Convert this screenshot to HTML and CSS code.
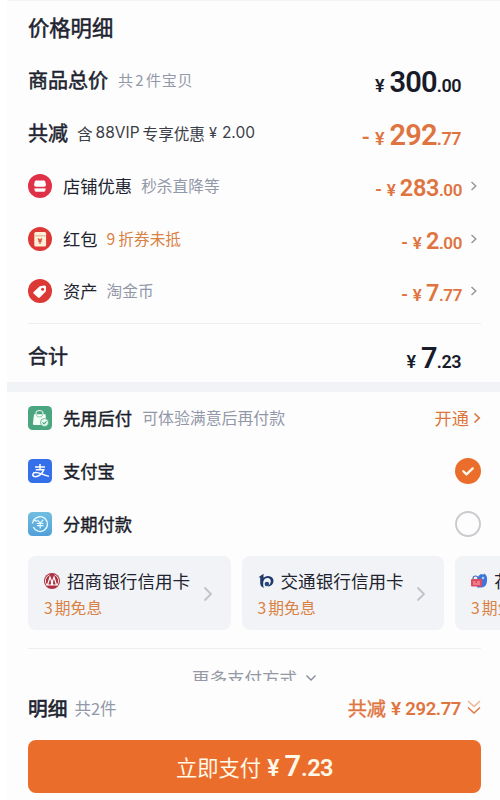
FILE: index.html
```html
<!DOCTYPE html>
<html lang="zh-CN">
<head>
<meta charset="utf-8">
<title>价格明细</title>
<link rel="stylesheet" href="styles.css">
</head>
<body>
<main class="sheet">
  <section class="summary">
    <div class="row"><h1 class="title">价格明细</h1></div>
    <div class="row">
      <span class="head">商品总价</span><span class="note count">共<i>2</i>件宝贝</span>
      <span class="price big"><span class="yen">¥</span><b>300</b><small>.00</small></span>
    </div>
    <div class="row">
      <span class="head">共减</span><span class="vip">含<i>88VIP</i>专享优惠<i class="vip-yen">¥</i><i class="vip-num">2.00</i></span>
      <span class="price big orange"><span class="minus">-</span><span class="yen">¥</span><b>292</b><small>.77</small></span>
    </div>
    <div class="row">
      <svg class="icon" viewBox="0 0 24 24"><circle cx="12" cy="12" r="12" fill="#df3148"/><path d="M8.300 6.500h7.400q1.100 0 1.500 1.100l.8 3.100q0 2-2 2H8q-2 0-2-2l.8-3.100q.4-1.100 1.500-1.100z" fill="#fff"/><path d="M6.500 14q1.300 1 2.700 0 1.400 1 2.800 0 1.400 1 2.800 0 1.400 1 2.700 0v2q0 1.800-1.800 1.800H8.300q-1.800 0-1.800-1.800z" fill="#fff"/></svg>
      <span class="name">店铺优惠</span><span class="note">秒杀直降等</span>
      <span class="price orange"><span class="minus">-</span><span class="yen">¥</span><b>283</b><small>.00</small></span>
      <svg class="more" viewBox="0 0 8 12"><path d="M1.500 2l4.300 4-4.300 4"/></svg>
    </div>
    <div class="row">
      <svg class="icon" viewBox="0 0 24 24"><circle cx="12" cy="12" r="12" fill="#dc3835"/><rect x="6.300" y="5" width="11.800" height="14.500" rx="1.500" fill="#fff0d5"/><path d="M6.500 8.800h11.400" stroke="#dfb5a4" stroke-width="1.200"/><path d="M10 11.500l2 2 2-2M10 14.200h4M12 13.500V17" fill="none" stroke="#d9534a" stroke-width="1.300"/></svg>
      <span class="name">红包</span><span class="note amber"><i>9</i>折券未抵</span>
      <span class="price orange"><span class="minus">-</span><span class="yen">¥</span><b>2</b><small>.00</small></span>
      <svg class="more" viewBox="0 0 8 12"><path d="M1.500 2l4.300 4-4.300 4"/></svg>
    </div>
    <div class="row">
      <svg class="icon" viewBox="0 0 24 24"><circle cx="12" cy="12" r="12" fill="#dc3835"/><path d="M5.600 13l6.200-5.700 4.400-.8q2-.2 1.900 1.700l-.3 4.300-6 6q-.9.800-1.800-.1l-4.400-4q-.8-.7 0-1.400z" fill="#fff"/><circle cx="14.600" cy="10.200" r="1.500" fill="#dc3835"/></svg>
      <span class="name">资产</span><span class="note">淘金币</span>
      <span class="price orange"><span class="minus">-</span><span class="yen">¥</span><b>7</b><small>.77</small></span>
      <svg class="more" viewBox="0 0 8 12"><path d="M1.500 2l4.300 4-4.300 4"/></svg>
    </div>
    <div class="total row">
      <span class="head">合计</span>
      <span class="price big"><span class="yen">¥</span><b>7</b><small>.23</small></span>
    </div>
  </section>
  <section class="methods">
    <div class="row">
      <svg class="icon" viewBox="0 0 24 24"><rect width="24" height="24" rx="4.500" fill="#4ba57f"/><path d="M6 8.300h11.500l1 9.700q0 1-1 1H6q-1.200 0-1.100-1.200z" fill="#f3fff7"/><path d="M8 9V7.500Q8 4.500 11.500 4.500T15 7.500V9" fill="none" stroke="#d7f3e2" stroke-width="1.200"/><path d="M8.500 8.500v.5q0 2 3 2t3-2v-.5" fill="none" stroke="#89c8a7"/><circle cx="16.500" cy="16.500" r="4" fill="#eafff2" stroke="#4ba57f" stroke-width=".8"/><path d="M14.600 16.400l1.500 1.500 2.500-2.600" fill="none" stroke="#4ba57f" stroke-width="1.200"/></svg>
      <span class="name strong">先用后付</span><span class="note trial">可体验满意后再付款</span>
      <span class="open">开通<svg viewBox="0 0 8 12"><path d="M1.500 1.500L6.200 6l-4.700 4.500"/></svg></span>
    </div>
    <div class="row">
      <svg class="icon" viewBox="0 0 24 24"><rect width="24" height="24" rx="4.500" fill="#356fea"/><path d="M7 8h10M12 5v5.700M7.800 10.800h8q-1.200 3.400-4 5.300-2.700 1.800-5 1.500-2.300-.4-2-2.300.4-1.900 2.700-1.900 2.500 0 6 1.500 3 1.300 7.500 2.500" fill="none" stroke="#fff" stroke-width="1.500"/></svg>
      <span class="name strong">支付宝</span>
      <svg class="radio" viewBox="0 0 26 26"><circle cx="13" cy="13" r="13" fill="#eb6d2c"/><path d="M8.300 13.200l3.200 3.200 6.200-6" fill="none" stroke="#fff8e9" stroke-width="2.300" stroke-linecap="round" stroke-linejoin="round"/></svg>
    </div>
    <div class="row">
      <svg class="icon" viewBox="0 0 24 24"><defs><linearGradient id="sky" x2="0" y2="1"><stop stop-color="#72bee1"/><stop offset="1" stop-color="#519fda"/></linearGradient></defs><rect width="24" height="24" rx="4.500" fill="url(#sky)"/><path d="M5.800 8.200A7.400 7.400 0 1 1 5.300 15M4.300 11.500l1.500-3.600 3 1.500" fill="none" stroke="#e5fbff" stroke-width="1.400"/><path d="M9.300 7.800l2.900 3.400 2.900-3.400M8.900 11.500h6.600M8.900 13.700h6.600M12.200 11.200v5.300" fill="none" stroke="#e5fbff" stroke-width="1.200"/></svg>
      <span class="name strong">分期付款</span>
      <svg class="radio" viewBox="0 0 26 26"><circle cx="13" cy="13" r="12" fill="none" stroke="#c9cace" stroke-width="1.900"/></svg>
    </div>
    <div class="cards">
      <article class="card">
        <div class="bank"><svg viewBox="0 0 16 16"><circle cx="8" cy="8" r="8" fill="#ad3140"/><path d="M5.300 1.800A6.600 6.600 0 0 0 3 12.200M10.700 1.800A6.600 6.600 0 0 1 13 12.200" fill="none" stroke="#f5e5e8" stroke-width="1"/><path d="M3.500 12L6 4l1.500 4V12M12.500 12L10 4 8.500 8V12M1.800 12h12.400" fill="none" stroke="#fff" stroke-width="1.200"/></svg>招商银行信用卡</div>
        <div class="offer"><i>3</i>期免息</div>
        <svg class="go" viewBox="0 0 10 16"><path d="M1.500 1.500L8 8l-6.500 6.500"/></svg>
      </article>
      <article class="card">
        <div class="bank"><svg viewBox="0 0 16 16"><path d="M.5 4.200L5.500.7v4Q7.500 3 10 3q5.500.4 5.500 5 0 4.500-6 5.800 3.300-2.200 3.300-5.200Q12.800 5 9.500 5T5.200 9v3.500Q5.200 14 6.500 15 2.200 14 2.200 10V4.500z" fill="#203969"/><circle cx="8.900" cy="11" r="2.300" fill="#234b82"/></svg>交通银行信用卡</div>
        <div class="offer"><i>3</i>期免息</div>
        <svg class="go" viewBox="0 0 10 16"><path d="M1.500 1.500L8 8l-6.500 6.500"/></svg>
      </article>
      <article class="card">
        <div class="bank"><svg viewBox="0 0 16 16"><path d="M7 4.500Q8 1 11 1l1 .8L13.500.6Q16.500 3 16 8q-.5 6-5.500 6.500H6z" fill="#3f75da"/><circle cx="12" cy="5" r="1.200" fill="#b8d2ff"/><path d="M2 6Q2 3 4.500 3T7 6" fill="none" stroke="#536bc0" stroke-width="1.200"/><rect y="6" width="11" height="7.500" rx="1" fill="#df4b61"/><path d="M2 9h2.500M6 9h3M2 11h7" stroke="#fbc8ce" stroke-width=".8"/></svg>花呗</div>
        <div class="offer"><i>3</i>期免息</div>
      </article>
    </div>
    <div class="others"><span>更多支付方式</span><svg viewBox="0 0 12 8"><path d="M1.500 1.500L6 6l4.500-4.500"/></svg></div>
  </section>
  <footer class="checkout">
    <div class="recap">
      <span class="detail">明细</span><span class="pieces">共2件</span>
      <span class="saved">共减<span class="saved-yen">¥</span><span class="saved-num">292.77</span><svg viewBox="0 0 14 15"><path d="M1 1l6 5.500L13 1" opacity=".55"/><path d="M1 7.500L7 13l6-5.500"/></svg></span>
    </div>
    <button class="pay" type="button"><span>立即支付</span><span class="pay-yen">¥</span><b>7</b><small>.23</small></button>
  </footer>
</main>
</body>
</html>
```
FILE: styles.css
```css
* { box-sizing: border-box; }
body {
  margin: 0;
  width: 500px;
  height: 800px;
  overflow: hidden;
  background: #fff;
  color: #20232f;
  font-family: "Noto Sans CJK SC", sans-serif;
}
i { font-style: normal; }
.sheet {
  margin-left: 7px;
  height: 800px;
  background: #fdfdfd;
  border-top: 1px solid #f4f4f5;
  display: flex;
  flex-direction: column;
}
.summary { height: 391px; border-bottom: 10px solid #f1f3f6; flex: none; }
.row {
  height: 52.8px;
  margin: 0 19px 0 21px;
  display: flex;
  align-items: center;
  white-space: nowrap;
  line-height: 26px;
}
.title { margin: 0; font-size: 21.3px; font-weight: 400; -webkit-text-stroke: .5px; }
.head { font-size: 20px; -webkit-text-stroke: .5px; }
.note { margin-left: 9px; font-size: 15.7px; color: #9298a8; }
.count { font-size: 15px; letter-spacing: .8px; margin-left: 10px; }
.count i { margin: 0 1.500px; }
.vip { margin-left: 9px; font-size: 15.600px; color: #3b3e48; display: flex; }
.vip i { font-family: Inter, sans-serif; font-size: 15.500px; margin: 0 3px 0 3px; }
.vip .vip-yen { font-size: 14.500px; margin: 0 0 0 4px; }
.vip .vip-num { margin: 0 0 0 5px; }
.icon { width: 24px; height: 24px; flex: none; }
.name { margin-left: 11px; font-size: 17.300px; }
.strong { -webkit-text-stroke: .4px; color: #1a1d29; }
.amber { color: #d98245; }
.amber i { margin-right: 2px; letter-spacing: 1px; }
.price {
  margin-left: auto;
  margin-right: 20px;
  display: flex;
  align-items: baseline;
  font-family: Roboto, sans-serif;
  font-weight: 600;
  color: #171b2a;
  position: relative;
  top: 3px;
}
.price b { font-size: 23.500px; font-weight: 600; letter-spacing: -.4px; margin-left: 4px; }
.price small { font-size: 17px; letter-spacing: -.4px; }
.yen { font-size: 17px; font-weight: 600; }
.minus { font-size: 18px; margin-right: 5px; }
.big { top: 4px; }
.big b { font-size: 29px; letter-spacing: -.8px; margin-left: 5px; }
.big small { font-size: 18px; letter-spacing: -.5px; }
.big .yen { font-size: 18px; }
.big .minus { font-size: 22px; }
.orange { color: #df7440; }
.more { width: 8px; height: 12px; margin: 0 3px 0 -12px; }
.more path { fill: none; stroke: #92959b; stroke-width: 1.400; }
.total { height: 63px; border-top: 1px solid #eeeff1; margin-top: 5px; padding-top: 2px; }
.methods { height: 289px; flex: none; overflow: hidden; }
.trial { font-size: 15.900px; margin-left: 10px; }
.open { margin-left: auto; font-size: 17.200px; color: #db773d; display: flex; align-items: center; }
.open svg { width: 8px; height: 12px; margin-left: 4px; }
.open path { fill: none; stroke: #db773d; stroke-width: 1.700; }
.radio { width: 26px; height: 26px; margin-left: auto; }
.cards { display: flex; gap: 11px; margin: 6px 0 0 21px; overflow: hidden; }
.card {
  width: 202.500px;
  height: 74px;
  flex: none;
  padding: 11px 18px 11px 16px;
  border-radius: 8px;
  background: #f2f3f6;
  display: grid;
  grid-template-columns: 1fr 10px;
  grid-template-rows: 28px 26px;
  align-items: center;
}
.bank { display: flex; align-items: center; white-space: nowrap; font-size: 17.600px; line-height: 28px; }
.bank svg { width: 16px; height: 16px; margin-right: 7px; flex: none; }
.offer { grid-column: 1; font-size: 15.800px; line-height: 26px; color: #d98245; }
.offer i { margin-right: 2px; }
.go { grid-column: 2; grid-row: 1 / 3; width: 10px; height: 16px; }
.go path { fill: none; stroke: #bfc2c8; stroke-width: 1.800; }
.others {
  margin: 18px 19px 0 21px;
  height: 60px;
  border-top: 1px solid #eeeff1;
  padding-top: 16px;
  display: flex;
  justify-content: center;
  align-items: flex-start;
  color: #9499a5;
  font-size: 17.500px;
  line-height: 26px;
}
.others svg { width: 12px; height: 8px; margin: 9px 0 0 8px; }
.others path { fill: none; stroke: #858b99; stroke-width: 1.400; }
.checkout { margin: 0 19px 0 21px; }
.recap { height: 53px; display: flex; align-items: center; margin-bottom: 6px; white-space: nowrap; }
.detail { font-size: 19.700px; -webkit-text-stroke: .6px; }
.pieces { margin-left: 7px; font-size: 16.500px; color: #9298a8; }
.saved { margin-left: auto; display: flex; align-items: center; color: #df7440; font-size: 19.200px; -webkit-text-stroke: .4px; }
.saved-yen, .saved-num { font-family: Roboto, sans-serif; font-weight: 600; -webkit-text-stroke: 0; position: relative; top: 1px; }
.saved-yen { margin-left: 5px; }
.saved-num { margin-left: 4px; font-size: 18.500px; letter-spacing: -.4px; }
.saved svg { width: 14px; height: 15px; margin-left: 6px; }
.saved path { fill: none; stroke: #df7440; stroke-width: 1.400; }
.pay {
  width: 100%;
  height: 53px;
  padding: 0;
  border: 0;
  border-radius: 8px;
  background: #eb6d2c;
  color: #fff9e9;
  display: flex;
  align-items: baseline;
  justify-content: center;
  font: 21.300px/53px "Noto Sans CJK SC", sans-serif;
}
.pay-yen, .pay b, .pay small { font-family: Roboto, sans-serif; font-weight: 600; }
.pay-yen { font-size: 23px; margin-left: 6px; }
.pay b { font-size: 29px; margin-left: 5px; }
.pay small { font-size: 23.500px; letter-spacing: -.5px; }
```
